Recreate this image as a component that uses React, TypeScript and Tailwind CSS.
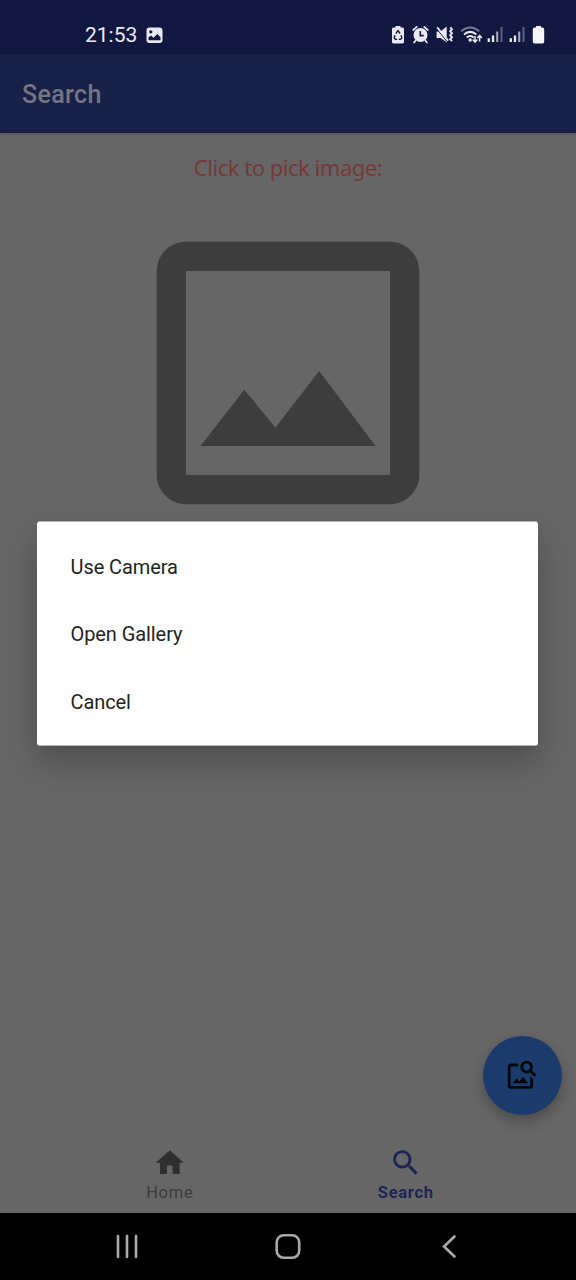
import type { ReactNode } from 'react';

function StatusIcon({ className, viewBox, children }: { className: string; viewBox: string; children: ReactNode }) {
  return (
    <svg className={className} viewBox={viewBox} fill="none" aria-hidden="true">
      {children}
    </svg>
  );
}

function Signal() {
  return (
    <>
      <path d="M1.8 13.200v3.800M6 10.500V17" stroke="#e8e9f2" strokeWidth="2.300" />
      <path d="M10.200 6.500V17" stroke="#a5a8c0" strokeWidth="2.100" />
      <path d="M14.500 2v15" stroke="#5a5d7c" strokeWidth="2.100" />
    </>
  );
}

function StatusBar() {
  return (
    <header className="flex h-[54px] shrink-0 items-start bg-[#12173f] pt-[25px] text-[#e8e9f2]">
      <span className="ml-[85px] w-[61px] text-[21px] leading-[21px] whitespace-nowrap">21:53</span>
      <StatusIcon className="mt-[2px] h-[17px] w-[17px]" viewBox="0 0 17 17">
        <rect x="0.5" y="0.5" width="16" height="15.5" rx="3" fill="#e8e9f2" />
        <circle cx="4.8" cy="4.8" r="1.6" fill="#12173f" />
        <path d="M2.5 13.3V10.6L5 8.6l2.5 2.2L11.3 7l3.2 3.2v3.1z" fill="#12173f" />
      </StatusIcon>
      <StatusIcon className="ml-[228px] h-[19px] w-[14px]" viewBox="0 0 14 19">
        <path d="M4.5 1h5v1.6h2q1.5 0 1.5 1.5v13q0 1.4-1.5 1.4h-9Q1 18.500 1 17.100v-13q0-1.500 1.500-1.500h2z" fill="#e8e9f2" />
        <path d="M4.900 8.500 7 5.700l2.100 2.800M10 10.300l.9 2.600-1.400 1.500H7.800M6.100 14.400H4.400L3.100 12.800 4 10.300" stroke="#12173f" strokeWidth="1.400" />
      </StatusIcon>
      <StatusIcon className="ml-[7px] h-[19px] w-[17px]" viewBox="0 0 17 19">
        <circle cx="8.500" cy="10" r="7" fill="#e8e9f2" />
        <path d="m1.200 5 3.600-3.200M15.800 5l-3.600-3.200M3.500 15.700l-1.400 1.900M13.500 15.700l1.400 1.900" stroke="#e8e9f2" strokeWidth="1.700" strokeLinecap="round" />
        <path d="M8.300 6v4.600h3.400" stroke="#12173f" strokeWidth="1.600" />
      </StatusIcon>
      <StatusIcon className="ml-[7px] h-[19px] w-[18px]" viewBox="0 0 18 19">
        <path d="M.6 6.500h4L10.700 1.500v15.800L4.600 12.900h-4z" fill="#e8e9f2" />
        <path d="m.2 3.400 10.500 12.600" stroke="#12173f" strokeWidth="1" />
        <path d="m1.200 2.400 11 13.200" stroke="#e8e9f2" strokeWidth="1.700" />
        <path d="M14.200 2.300l1.800 1.900-1.800 2 1.800 2-1.800 2 1.800 2-1.800 2 1.800 2" stroke="#e8e9f2" strokeWidth="1.900" />
      </StatusIcon>
      <StatusIcon className="ml-[6px] h-[19px] w-[23px]" viewBox="0 0 23 19">
        <path d="M1.200 6.300q9-7.500 18 0" stroke="#777a98" strokeWidth="1.900" />
        <path d="M4 9.600q6.200-5.400 12.400 0M6.800 12.500q3.400-3 6.800 0" stroke="#e8e9f2" strokeWidth="2" />
        <circle cx="10.200" cy="15" r="1.700" fill="#e8e9f2" />
        <path d="M15 11v6m-2.300-2.400 2.300 2.600 2.300-2.600M19.600 16.500v-6m-2.200 2.600 2.200-2.600 2.200 2.600" stroke="#e8e9f2" strokeWidth="1.500" />
      </StatusIcon>
      <StatusIcon className="ml-[4px] h-[18px] w-[16px]" viewBox="0 0 16 18"><Signal /></StatusIcon>
      <StatusIcon className="ml-[6px] h-[18px] w-[16px]" viewBox="0 0 16 18"><Signal /></StatusIcon>
      <StatusIcon className="ml-[7px] h-[19px] w-[13px]" viewBox="0 0 13 19">
        <path d="M4 1h5v1.600h1.500q1.700 0 1.700 1.700v12.500q0 1.700-1.700 1.700h-8Q.8 18.500.8 16.800V4.300q0-1.700 1.700-1.700H4z" fill="#f5f5fa" />
      </StatusIcon>
    </header>
  );
}

function Dialog() {
  return (
    <div role="dialog" className="absolute top-[521px] left-[37px] flex h-[225px] w-[501px] flex-col justify-center rounded-[3px] border-t border-b border-t-[#b5b5b5] border-b-[#b5b5b5] bg-white px-[33.500px] pt-[2px] text-[20px] tracking-[-0.080px] text-[#242424] shadow-[0_16px_32px_rgba(0,0,0,0.24)]">
      {['Use Camera', 'Open Gallery', 'Cancel'].map((label) => (
        <button key={label} className="flex h-[67.300px] shrink-0 items-center text-left">
          {label}
        </button>
      ))}
    </div>
  );
}

export default function App() {
  return (
    <div className="relative flex h-[1280px] w-[576px] flex-col overflow-hidden bg-[#666666] font-[Roboto,sans-serif]">
      <StatusBar />
      <div className="flex h-[79px] shrink-0 items-center bg-[#192048] pt-[2px] pl-[22px] shadow-[0_1px_4px_rgba(0,0,0,0.2)]">
        <h1 className="text-[25px] font-medium tracking-[0.350px] text-[#737582]">Search</h1>
      </div>

      <main className="flex flex-1 flex-col items-center">
        <p className="mt-[18px] h-[32px] font-['Noto_Sans',sans-serif] text-[22px] leading-[32px] tracking-[-0.480px] whitespace-nowrap text-[#753939]">Click to pick image:</p>
        <svg className="mt-[15px] h-[350px] w-[350px]" viewBox="0 0 24 24" fill="#3d3d3d">
          <path d="M19 5v14H5V5h14m0-2H5c-1.100 0-2 .9-2 2v14c0 1.100.9 2 2 2h14c1.100 0 2-.9 2-2V5c0-1.100-.9-2-2-2zm-4.860 8.860-3 3.870L9 13.140 6 17h12l-3.860-5.140z" />
        </svg>
      </main>

      <nav className="flex h-[82px] shrink-0 border-t border-[#636363] px-[52px] text-[16.500px] leading-[20px]">
        <div className="flex w-[235.500px] flex-col items-center pt-[13.500px] text-[#3b3b3b]">
          <svg className="h-[33.600px] w-[33.600px]" viewBox="0 0 24 24" fill="#2f2f2f"><path d="M10 20v-6h4v6h5v-8h3L12 3 2 12h3v8z" /></svg>
          <span className="mt-[4px] tracking-[0.700px]">Home</span>
        </div>
        <div className="flex w-[235.500px] flex-col items-center pt-[13.500px] pl-[1px] text-[#1c2454]">
          <svg className="h-[33.600px] w-[33.600px]" viewBox="0 0 24 24" fill="currentColor"><path d="M15.500 14h-.79l-.28-.27C15.410 12.590 16 11.110 16 9.500 16 5.910 13.090 3 9.500 3S3 5.910 3 9.500 5.910 16 9.500 16c1.610 0 3.090-.59 4.230-1.570l.27.28v.79l5 4.990L20.490 19l-4.990-5zm-6 0C7.010 14 5 11.990 5 9.500S7.010 5 9.500 5 14 7.010 14 9.500 11.990 14 9.500 14z" /></svg>
          <span className="mt-[4px] font-bold tracking-[0.700px]">Search</span>
        </div>
      </nav>

      <footer className="flex h-[67px] shrink-0 items-center justify-between bg-black px-[111px] pb-[2px]">
        <svg className="h-8 w-8" viewBox="0 0 32 32" fill="none" stroke="#aaaaaa" strokeWidth="2.600" strokeLinecap="round"><path d="M7 6v21M16 6v21M25 6v21" /></svg>
        <svg className="h-8 w-8" viewBox="0 0 32 32" fill="none" stroke="#aaaaaa" strokeWidth="2.600"><rect x="4.700" y="5.300" width="22.500" height="22.500" rx="7" /></svg>
        <svg className="h-8 w-8" viewBox="0 0 32 32" fill="none" stroke="#aaaaaa" strokeWidth="2.600" strokeLinecap="round"><path d="M21.500 6.500 11 16.500l10.500 10" /></svg>
      </footer>

      <button aria-label="Search by image" className="absolute top-[1036px] left-[483px] flex h-[78.500px] w-[78.500px] items-center justify-center rounded-full bg-[#1b3b6c] shadow-[0_6px_14px_rgba(0,0,0,0.28)]">
        <svg className="h-[33.600px] w-[33.600px]" viewBox="0 0 24 24" fill="#050609">
          <path d="M18 13v7H4V6h5.020c.05-.71.22-1.380.48-2H4c-1.100 0-2 .9-2 2v14c0 1.100.9 2 2 2h14c1.100 0 2-.9 2-2v-5l-2-2zm-1.500 5h-11l2.750-3.530 1.960 2.360 2.750-3.540zm2.800-9.110c.44-.7.7-1.510.7-2.390C20 4.010 17.990 2 15.500 2S11 4.010 11 6.500s2.010 4.500 4.490 4.500c.88 0 1.700-.26 2.390-.7L21 13.420 22.420 12 19.300 8.890zM15.500 9C14.120 9 13 7.880 13 6.500S14.120 4 15.500 4 18 5.120 18 6.500 16.880 9 15.500 9z" />
        </svg>
      </button>
      <Dialog />
    </div>
  );
}
